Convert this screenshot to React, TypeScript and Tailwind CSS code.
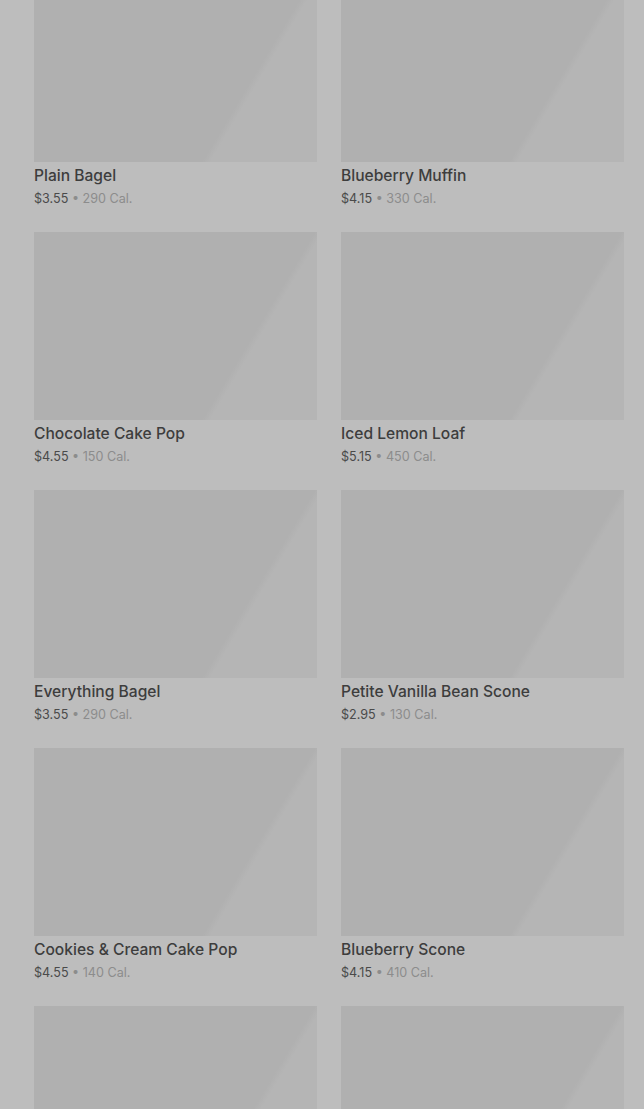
import React from 'react';

interface Item {
  name: string;
  price: string;
  cal: number;
}

const items: Item[] = [
  { name: 'Plain Bagel', price: '$3.55', cal: 290 },
  { name: 'Blueberry Muffin', price: '$4.15', cal: 330 },
  { name: 'Chocolate Cake Pop', price: '$4.55', cal: 150 },
  { name: 'Iced Lemon Loaf', price: '$5.15', cal: 450 },
  { name: 'Everything Bagel', price: '$3.55', cal: 290 },
  { name: 'Petite Vanilla Bean Scone', price: '$2.95', cal: 130 },
  { name: 'Cookies & Cream Cake Pop', price: '$4.55', cal: 140 },
  { name: 'Blueberry Scone', price: '$4.15', cal: 410 },
  { name: '', price: '', cal: 0 },
  { name: '', price: '', cal: 0 },
];

const ProductCard = ({ item }: { item: Item }) => (
  <div className="h-[258px]">
    {/* placeholder image, mid-shimmer */}
    <div className="h-[188px] bg-[linear-gradient(121deg,#b0b0b0_71%,#b5b5b5_73%)]" />
    {item.name && (
      <div className="pt-[4px]">
        <p className="text-[15.6px] leading-[20px] font-medium text-[#3d3d3d]">{item.name}</p>
        <p className="mt-[3px] text-[12.6px] leading-[20px] text-[#8c8c8c]">
          <span className="text-[#4a4a4a]">{item.price}</span> • {item.cal} Cal.
        </p>
      </div>
    )}
  </div>
);

export default function App() {
  return (
    <div
      className="h-[1109px] overflow-hidden bg-[#bdbdbd]"
      style={{ fontFamily: 'Inter, "Noto Sans", sans-serif' }}
    >
      <div className="-mt-[26px] pl-[34px] pr-[20px] grid grid-cols-2 gap-x-[24px]">
        {items.map((item, i) => (
          <ProductCard key={i} item={item} />
        ))}
      </div>
    </div>
  );
}
